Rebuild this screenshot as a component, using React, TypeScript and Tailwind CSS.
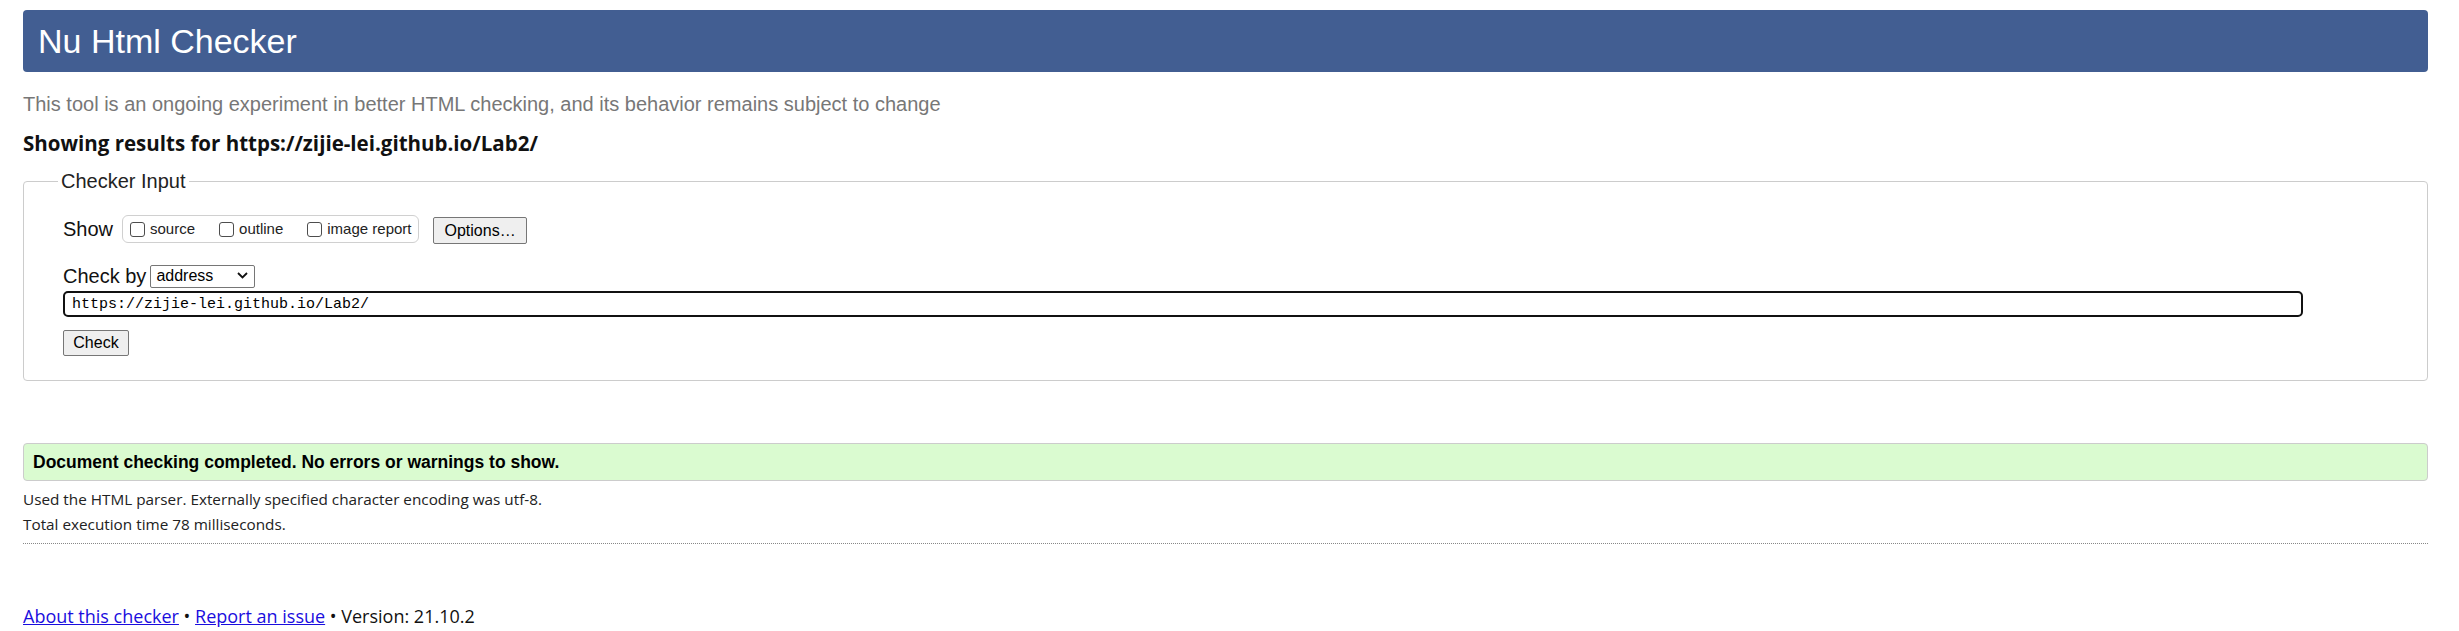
import React from "react";

const arial = { fontFamily: '"Liberation Sans", Arial, sans-serif' };

function Box({ label }: { label: string }) {
  return (
    <label className="flex items-center">
      <input
        type="checkbox"
        className="appearance-none w-[15px] h-[15px] rounded-[3px] border border-[#4d4d4d] bg-white"
      />
      <span className="ml-[5px] text-[15px] leading-[20px] text-[#222] font-['Liberation_Sans',Arial,sans-serif]">
        {label}
      </span>
    </label>
  );
}

export default function App() {
  return (
    <div className="min-h-[631px] bg-white pl-[23px] pr-[31px] pt-[10px] font-['Liberation_Sans',Arial,sans-serif] text-[#111]">
      <header className="h-[62px] flex items-center pl-[15px] rounded-[4px] bg-[#425e92]">
        <h1 className="text-[34px] leading-[40px] text-white font-normal">Nu Html Checker</h1>
      </header>

      <p className="mt-[20px] text-[20px] leading-[24px] text-[#777777]">
        This tool is an ongoing experiment in better HTML checking, and its behavior remains subject to change
      </p>

      <p className="mt-[15px] text-[20.5px] leading-[24px] font-bold text-[#111] font-['Open_Sans',sans-serif]">
        Showing results for https://zijie-lei.github.io/Lab2/
      </p>

      <fieldset className="mt-[15px] border border-[#cccccc] rounded-[4px] pl-[39px] pt-[22px] pb-[24px]">
        <legend className="ml-[-5px] px-[3px] text-[20px] leading-[23px] text-[#222]">Checker Input</legend>

        <div className="flex items-start">
          <span className="text-[20px] leading-[28px] text-[#111]">Show</span>
          <div className="ml-[9px] h-[28px] flex items-center gap-[24px] pl-[7px] pr-[7px] border border-[#d0d0d0] rounded-[6px]">
            <Box label="source" />
            <Box label="outline" />
            <Box label="image report" />
          </div>
          <button
            type="button"
            className="ml-[14px] mt-[2px] h-[27px] px-[10px] bg-[#efefef] border border-[#767676] rounded-[2px] text-[16px] leading-[20px] text-black"
          >
            Options…
          </button>
        </div>

        <div className="mt-[20px] flex items-center">
          <span className="text-[20px] leading-[23px] text-[#111]">Check by</span>
          <div className="relative ml-[4px]">
            <select
              className="appearance-none w-[105px] h-[23px] pl-[5px] border border-[#767676] rounded-[2px] bg-white text-[16px] leading-[20px] text-black"
              defaultValue="address"
              style={arial}
            >
              <option value="address">address</option>
              <option value="file">file upload</option>
              <option value="text">text input</option>
            </select>
            <svg
              className="pointer-events-none absolute right-[7px] top-[8px]"
              width="11"
              height="7"
              viewBox="0 0 11 7"
            >
              <polyline points="1,1 5.5,5.5 10,1" fill="none" stroke="#111" strokeWidth="1.8" />
            </svg>
          </div>
        </div>

        <input
          type="url"
          defaultValue="https://zijie-lei.github.io/Lab2/"
          className="mt-[3px] block w-[2240px] h-[26px] pl-[7px] border-2 border-[#111] rounded-[5px] bg-white text-[15px] text-black font-['Liberation_Mono',monospace] outline-none"
        />

        <button
          type="button"
          className="mt-[13px] block w-[66px] h-[26px] bg-[#efefef] border border-[#767676] rounded-[2px] text-[16px] leading-[20px] text-black"
        >
          Check
        </button>
      </fieldset>

      <div className="mt-[62px] h-[38px] flex items-center pl-[9px] border border-[#cccccc] rounded-[4px] bg-[#dafbd0]">
        <span className="text-[17.5px] font-bold text-black">
          Document checking completed. No errors or warnings to show.
        </span>
      </div>

      <div className="mt-[6px] font-['Open_Sans',sans-serif] text-[15.3px] leading-[25px] text-[#222]">
        <p>Used the HTML parser. Externally specified character encoding was utf-8.</p>
        <p>Total execution time 78 milliseconds.</p>
      </div>

      <hr className="mt-[6px] border-0 border-t border-dotted border-[#888888]" />

      <p className="mt-[60px] font-['Open_Sans',sans-serif] text-[18px] leading-[25px] text-[#111]">
        <a href="#" className="text-[#1a0dde] underline">About this checker</a>
        {" • "}
        <a href="#" className="text-[#1a0dde] underline">Report an issue</a>
        {" • Version: 21.10.2"}
      </p>
    </div>
  );
}
